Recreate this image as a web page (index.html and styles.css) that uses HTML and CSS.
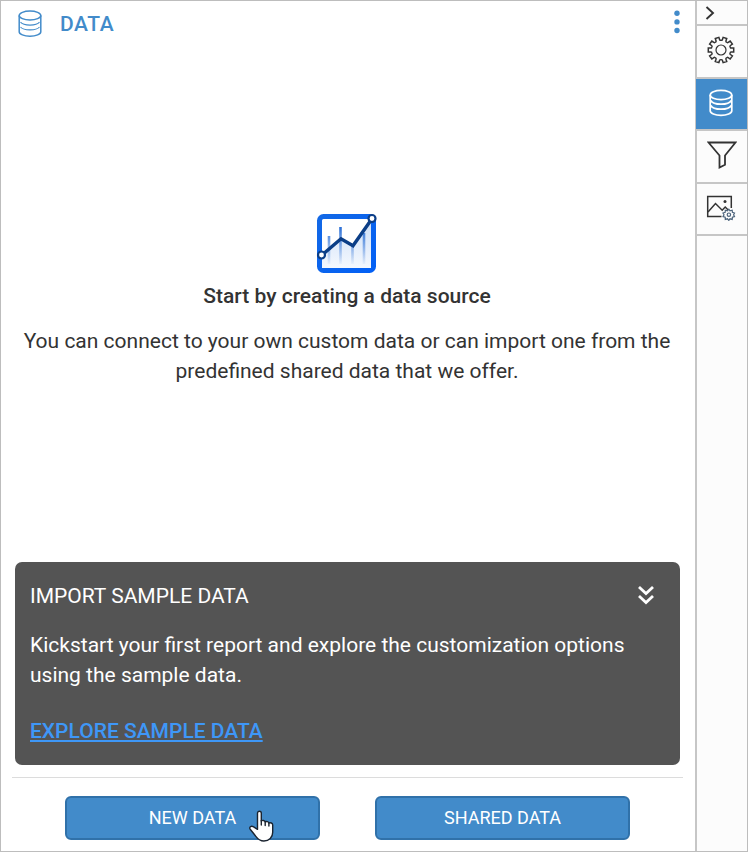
FILE: index.html
```html
<!DOCTYPE html>
<html lang="en">
<head>
<meta charset="utf-8">
<title>Data</title>
<link rel="stylesheet" href="styles.css">
</head>
<body>
<div class="window">
  <main class="panel">
    <header class="panel-header">
      <svg class="db-icon" width="24" height="28" viewBox="0 0 24 28"><ellipse cx="12" cy="5.5" rx="10.8" ry="4.5"/><path d="M1.2 5.500v16.200c0 2.500 4.800 4.500 10.800 4.500s10.800-2 10.800-4.500V5.500"/><path class="thin" d="M2.500 12.200c1.500 1.900 5 2.900 9.500 2.900s8-1 9.500-2.900M2.500 17c1.500 1.900 5 2.900 9.500 2.900s8-1 9.500-2.900"/></svg>
      <h1>DATA</h1>
      <svg class="dots" width="6" height="24" viewBox="0 0 6 24"><circle cx="3" cy="3.300" r="2.700"/><circle cx="3" cy="11.900" r="2.700"/><circle cx="3" cy="20.500" r="2.700"/></svg>
    </header>
    <section class="empty">
      <svg class="chart" width="64" height="62" viewBox="0 0 64 62">
        <defs>
          <linearGradient id="bar" x1="0" y1="0" x2="0" y2="1"><stop offset="0" stop-color="#2a6fd6"/><stop offset="1" stop-color="#2a6fd6" stop-opacity="0.050"/></linearGradient>
          <linearGradient id="area" x1="0" y1="0" x2="0" y2="1"><stop offset="0" stop-color="#cfe0f7"/><stop offset="1" stop-color="#f4f8fe"/></linearGradient>
          <linearGradient id="frame" x1="0" y1="0" x2="1" y2="1"><stop offset="0" stop-color="#1268e6"/><stop offset="1" stop-color="#0360f5"/></linearGradient>
        </defs>
        <rect x="4.500" y="4.500" width="54" height="54" rx="4" fill="#fff" stroke="url(#frame)" stroke-width="5"/>
        <path d="M7 43L26 27l12 7L56 10v46H7z" fill="url(#area)"/>
        <path d="M12.700 24h2.600v28h-2.600zM24.200 15h2.600v37h-2.600zM36.200 33h2.600v19h-2.600zM47.700 21h2.600v31h-2.600z" fill="url(#bar)"/>
        <path d="M7 43L26 26.800l12 7L56.800 7" fill="none" stroke="#0b3e87" stroke-width="3.400"/>
        <circle class="node" cx="6.500" cy="43" r="3.500"/><circle class="node" cx="57" cy="6.500" r="3.500"/>
      </svg>
      <h2>Start by creating a data source</h2>
      <p>You can connect to your own custom data or can import one from the predefined shared data that we offer.</p>
    </section>
    <section class="sample">
      <div class="sample-head">
        <h3>IMPORT SAMPLE DATA</h3>
        <svg class="collapse" width="18" height="20" viewBox="0 0 18 20"><path d="M2 2l7 6.500L16 2M2 11l7 6.500L16 11"/></svg>
      </div>
      <p>Kickstart your first report and explore the customization options using the sample data.</p>
      <a href="#">EXPLORE SAMPLE DATA</a>
    </section>
    <footer class="actions">
      <button type="button">NEW DATA</button>
      <button type="button">SHARED DATA</button>
    </footer>
  </main>
  <nav class="rail">
    <div class="tab tab-toggle"><svg width="10" height="16" viewBox="0 0 10 16"><path d="M1.500 2l6.500 6-6.500 6" stroke-width="1.900"/></svg></div>
    <div class="tab tab-gear"><svg width="28" height="28" viewBox="-14 -14 28 28">
      <defs><path id="tooth" d="M-3.100-9.500Q-2-9-1.900-10.300L-1.900-12.700H1.900L1.900-10.300Q2-9 3.100-9.500"/></defs>
      <g stroke-width="1.500"><use href="#tooth" transform="rotate(18)"/><use href="#tooth" transform="rotate(54)"/><use href="#tooth" transform="rotate(90)"/><use href="#tooth" transform="rotate(126)"/><use href="#tooth" transform="rotate(162)"/><use href="#tooth" transform="rotate(198)"/><use href="#tooth" transform="rotate(234)"/><use href="#tooth" transform="rotate(270)"/><use href="#tooth" transform="rotate(306)"/><use href="#tooth" transform="rotate(342)"/><circle r="5" stroke-width="1.200"/></g></svg></div>
    <div class="tab tab-data"><svg width="24" height="28" viewBox="0 0 24 28"><ellipse cx="12" cy="6" rx="10.800" ry="4.700"/><path d="M1.200 6v15.700c0 2.500 4.800 4.700 10.800 4.700s10.800-2.200 10.800-4.700V6M1.800 11.500c1.200 2.300 5.200 3.700 10.200 3.700s9-1.400 10.200-3.700M1.800 16.500c1.200 2.300 5.200 3.700 10.200 3.700s9-1.400 10.200-3.700"/></svg></div>
    <div class="tab tab-filter"><svg width="30" height="28" viewBox="0 0 30 28"><path d="M1.500 1.500h27L18 14.500v9.300L12.500 26.500v-12z" stroke-width="1.800"/></svg></div>
    <div class="tab tab-image"><svg width="30" height="26" viewBox="0 0 30 26">
      <path d="M15.500 21.500H1.700V1.500h23.600V13" stroke-width="1.500"/><path d="M2 17l7.500-8.500 6.700 6.700 3-3.200 3 3" stroke-width="1.500"/><circle cx="19" cy="6.500" r="1.500" class="solid"/>
      <path class="mini" d="M22.800 14.200l1.200 1.600 2.200-.6.200 2.200 2.100.6-.9 1.700.9 1.900-2.100.6-.2 2.200-2.200-.6-1.200 1.600-1.300-1.600-2.200.6-.1-2.200-2.200-.6 1-1.900-1-1.700 2.200-.6.100-2.200 2.200.6z"/><circle class="mini" cx="22.900" cy="19.700" r="1.700"/></svg></div>
  </nav>
</div>
<svg class="cursor" width="28" height="34" viewBox="0 0 28 34"><path d="M8.500 3.300C8.500.500 12.300.500 12.300 3.300V11c1-1 3.500-.7 3.900.9 1.200-.9 3.300-.4 3.700 1.100 1.500-.7 3.800 0 3.800 2.100v7.200c0 5-3.500 8.700-8.800 8.700-4.200 0-6.300-2.200-8.500-5.200L1.200 19.200c-1.300-2 .9-3.700 3-2.600l4.300 2.700z"/><path d="M12.300 10.500V15M16.200 11.500V15.500M19.900 13V16"/></svg>
</body>
</html>
```
FILE: styles.css
```css
* { box-sizing: border-box; }
body { margin: 0; font-family: Roboto, "Liberation Sans", sans-serif; color: #333; }
h1, h2, h3, p { margin: 0; }
svg { display: block; fill: none; flex: none; }

.window { display: flex; width: 748px; height: 852px; border: 1px solid #bdbdbd; background: #fff; }
.panel { flex: 1; display: flex; flex-direction: column; min-width: 0; }

.panel-header { display: flex; align-items: center; height: 46px; padding: 0 15px 0 17px; color: #428bca; }
.db-icon { stroke: #428bca; stroke-width: 1.5; }
.db-icon .thin { stroke-width: 1.1; }
.panel-header h1 { flex: 1; margin-left: 18px; font-size: 21px; line-height: 24px; font-weight: 500; letter-spacing: 0.6px; }
.dots { margin-bottom: 4px; fill: #428bca; }

.empty { flex: 1; display: flex; flex-direction: column; align-items: center; padding: 165px 18px 0 16px; text-align: center; }
.node { fill: #fff; stroke: #0b3e87; stroke-width: 2.2; }
.empty h2 { margin-top: 7px; font-size: 21px; line-height: 30px; font-weight: 500; }
.empty p { margin-top: 15px; font-size: 21px; line-height: 30px; }

.sample { height: 203px; margin: 0 15px 0 14px; padding: 19px 15px 0; border-radius: 7px; background: #545454; color: #fff; font-size: 21px; line-height: 30px; }
.sample-head { display: flex; justify-content: space-between; align-items: center; padding-right: 10px; }
.sample h3 { font-size: 21px; font-weight: 400; }
.sample p { margin-top: 19px; }
.sample a { display: inline-block; margin-top: 26px; color: #3e97f7; font-weight: 500; text-decoration-thickness: 2px; text-underline-offset: 2px; }
.collapse { margin-bottom: 2px; stroke: #fff; stroke-width: 2.8; }

.actions { display: flex; justify-content: center; gap: 55px; height: 74px; margin: 12px 12px 0 11px; padding-top: 18px; border-top: 1px solid #dcdcdc; }
.actions button { width: 255px; height: 44px; padding: 0; border: 2px solid #3071a9; border-radius: 6px; background: #428bca; color: #fff; font: 400 18px/24px Roboto, "Liberation Sans", sans-serif; }

.rail { width: 52px; border-left: 2px solid #c6c6c6; background: #fcfcfc; }
.tab { display: flex; align-items: center; justify-content: center; height: 53px; border-bottom: 2px solid #c6c6c6; stroke: #333; }
.tab-toggle { height: 25px; justify-content: flex-start; padding-left: 8px; }
.tab-gear { padding-right: 2px; padding-bottom: 4px; }
.tab-data { height: 52px; margin-left: -1px; padding-right: 1px; padding-bottom: 2px; background: #428bca; stroke: #fff; stroke-width: 1.7; }
.tab-filter { padding-bottom: 4px; }
.tab-image { height: 52px; padding-right: 2px; padding-bottom: 2px; }
.solid { fill: #333; stroke: none; }
.mini { stroke: #4d647c; stroke-width: 1.2; fill: #fcfcfc; }

.cursor { position: absolute; left: 249px; top: 810px; fill: #fff; stroke: #1b2430; stroke-width: 1.4; stroke-linejoin: round; stroke-linecap: round; }
```
